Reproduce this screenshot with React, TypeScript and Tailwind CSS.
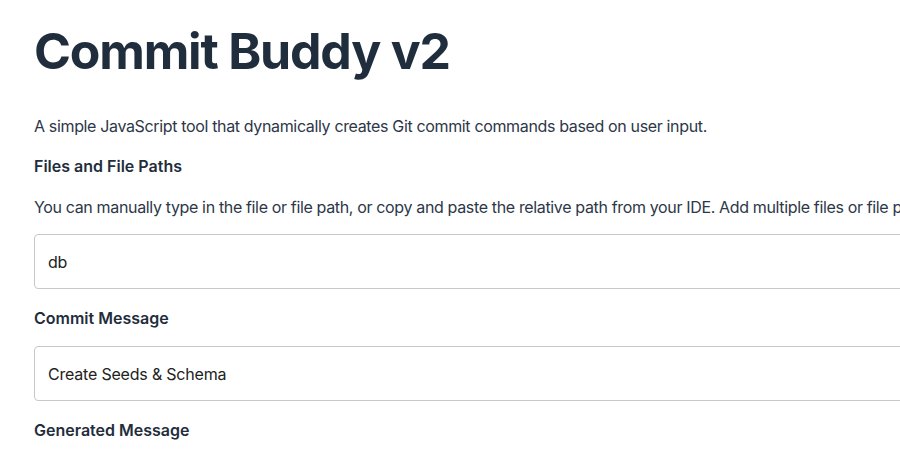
export default function App() {
  return (
    <div className="w-screen h-screen overflow-hidden bg-white font-['Inter',sans-serif]">
      <main className="w-[1200px] px-[34px] pt-[18px]">
        <h1 className="text-[50px] leading-[66px] font-bold text-[#1f2d3d] tracking-[-1.2px]">
          Commit Buddy v2
        </h1>

        <p className="mt-[30px] text-[16px] leading-6 text-[#2d3748] tracking-[-0.35px] whitespace-nowrap">
          A simple JavaScript tool that dynamically creates Git commit commands based on user input.
        </p>

        <h3 className="mt-4 text-[16px] leading-6 font-semibold text-[#1f2d3d]">Files and File Paths</h3>
        <p className="mt-[17px] text-[16px] leading-6 text-[#2d3748] tracking-[-0.35px] whitespace-nowrap">
          You can manually type in the file or file path, or copy and paste the relative path from your IDE. Add multiple files or file paths by separating them with a space.
        </p>
        <input
          className="mt-[15px] block w-[1100px] h-[55px] rounded-[4px] border border-[#c8c8c8] px-[13px] text-[16px] tracking-[-0.2px] text-[#222] outline-none"
          defaultValue="db"
          readOnly
        />

        <h3 className="mt-[17px] text-[16px] leading-6 font-semibold text-[#1f2d3d]">Commit Message</h3>
        <input
          className="mt-4 block w-[1100px] h-[55px] rounded-[4px] border border-[#c8c8c8] px-[13px] text-[16px] tracking-[-0.2px] text-[#222] outline-none"
          defaultValue="Create Seeds & Schema"
          readOnly
        />

        <h3 className="mt-[17px] text-[16px] leading-6 font-semibold text-[#1f2d3d]">Generated Message</h3>
      </main>
    </div>
  )
}
